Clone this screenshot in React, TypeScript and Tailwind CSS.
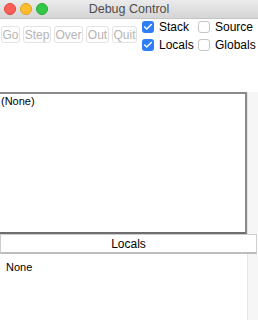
import { Check } from 'lucide-react';

const buttons = [
  { name: 'Go', w: 'w-[19px]' },
  { name: 'Step', w: 'w-[28px]' },
  { name: 'Over', w: 'w-[29px]' },
  { name: 'Out', w: 'w-[23px]' },
  { name: 'Quit', w: 'w-[25px]' },
];

const toggles = [
  { name: 'Stack', checked: true },
  { name: 'Source', checked: false },
  { name: 'Locals', checked: true },
  { name: 'Globals', checked: false },
];

export default function App() {
  return (
    <div
      className="flex flex-col w-[258px] h-[320px] bg-white overflow-hidden text-black"
      style={{ fontFamily: '"Liberation Sans", Arial, sans-serif' }}
    >
      {/* Title bar */}
      <div className="relative h-[19px] flex items-center justify-center bg-gradient-to-b from-[#ebebeb] to-[#d5d5d5] border-b border-[#c4c4c4]">
        <div className="absolute left-[4px] top-[3px] flex gap-[4px]">
          <span className="w-[12px] h-[12px] rounded-full bg-[#fc5f57] border border-[#e0443e]" />
          <span className="w-[12px] h-[12px] rounded-full bg-[#fdbc2e] border border-[#dea123]" />
          <span className="w-[12px] h-[12px] rounded-full bg-[#33c748] border border-[#27aa35]" />
        </div>
        <span className="text-[12.5px] text-[#4d4d4d] leading-none">Debug Control</span>
      </div>

      {/* Toolbar */}
      <div className="h-[73px] flex items-start">
        <div className="flex gap-[3px] pl-[1px] pt-[7px]">
          {buttons.map((b) => (
            <button
              key={b.name}
              disabled
              className={`${b.w} h-[17px] flex items-center justify-center rounded-[3px] border border-[#e3e3e3] bg-white text-[12px] text-[#b4b4b4] leading-none`}
            >
              {b.name}
            </button>
          ))}
        </div>
        <div className="grid grid-cols-[56px_60px] gap-y-[6px] pl-[5px] pt-[2px]">
          {toggles.map((t) => (
            <label key={t.name} className="flex items-center gap-[5px] h-[12px] text-[12px] leading-none">
              {t.checked ? (
                <span className="w-[12px] h-[12px] rounded-[3px] bg-[#2f7ef6] flex items-center justify-center">
                  <Check className="w-[10px] h-[10px] text-white" strokeWidth={3.5} />
                </span>
              ) : (
                <span className="w-[12px] h-[12px] rounded-[3px] border border-[#c6c6c6] bg-white" />
              )}
              <span>{t.name}</span>
            </label>
          ))}
        </div>
      </div>

      {/* Stack list */}
      <div className="flex h-[142px]">
        <div className="w-[247px] border-t-2 border-r-2 border-b-2 border-t-[#8a8a8a] border-r-[#8a8a8a] border-b-[#6e6e6e] bg-white">
          <div className="text-[11px] leading-[13px] pl-[1px] pt-[1px]">(None)</div>
        </div>
        <div className="flex-1 bg-[#f6f6f6] border-l border-[#e2e2e2]" />
      </div>

      {/* Locals header */}
      <div className="h-[20px] w-[257px] flex items-center justify-center border border-[#cdcdcd] border-b-2 border-b-[#bdbdbd] bg-white text-[12px] leading-none">
        Locals
      </div>

      {/* Locals list */}
      <div className="flex flex-1">
        <div className="w-[247px] text-[11px] leading-[13px] pl-[6px] pt-[7px]">None</div>
        <div className="flex-1 bg-[#f6f6f6] border-l border-[#e6e6e6]" />
      </div>
    </div>
  );
}
